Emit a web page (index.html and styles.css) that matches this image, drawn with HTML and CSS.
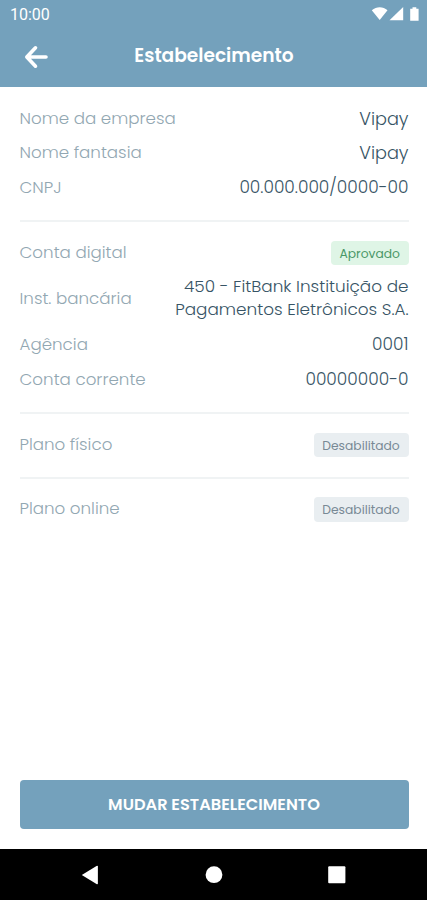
FILE: index.html
```html
<!DOCTYPE html>
<html lang="pt-BR">
<head>
<meta charset="utf-8">
<title>Estabelecimento</title>
<link rel="stylesheet" href="styles.css">
</head>
<body>
<div class="screen">
  <header class="top">
    <div class="status">
      <span class="clock">10:00</span>
      <svg class="signals" width="50" height="16" viewBox="0 0 50 16" fill="#fff">
        <path d="M.8 4.200C5.500 .3 12 .3 16.500 4.200L8.700 14z"/>
        <path d="M18.500 14.300H32.200V1z"/>
        <path d="M39.200 2.800h2.300V1.200h3.800v1.600h2.300V14.800h-8.400z"/>
      </svg>
    </div>
    <div class="appbar">
      <svg class="back" width="26" height="26" viewBox="0 0 26 26" fill="none" stroke="#fff" stroke-width="3.600" stroke-linecap="round" stroke-linejoin="round"><path d="M23 13H4M12.500 3.800L3.800 13l8.700 9.200"/></svg>
      <h1 class="title">Estabelecimento</h1>
    </div>
  </header>
  <main class="content">
    <section class="group">
      <div class="row"><span class="label">Nome da empresa</span><span class="value name">Vipay</span></div>
      <div class="row"><span class="label">Nome fantasia</span><span class="value name">Vipay</span></div>
      <div class="row"><span class="label">CNPJ</span><span class="value">00.000.000/0000-00</span></div>
    </section>
    <section class="group account">
      <div class="row"><span class="label">Conta digital</span><span class="badge approved">Aprovado</span></div>
      <div class="row bank-row"><span class="label">Inst. bancária</span><span class="value bank">450 - FitBank Instituição de<br>Pagamentos Eletrônicos S.A.</span></div>
      <div class="row"><span class="label">Agência</span><span class="value">0001</span></div>
      <div class="row"><span class="label">Conta corrente</span><span class="value">00000000-0</span></div>
    </section>
    <section class="group plan">
      <div class="row"><span class="label">Plano físico</span><span class="badge disabled">Desabilitado</span></div>
    </section>
    <section class="group plan">
      <div class="row"><span class="label">Plano online</span><span class="badge disabled">Desabilitado</span></div>
    </section>
  </main>
  <button class="action">MUDAR ESTABELECIMENTO</button>
  <nav class="navbar">
    <svg width="18" height="20" viewBox="0 0 18 20" fill="#fff"><path d="M.8 10L15.500 1q1.400-.6 1.400.6V18.400q0 1.200-1.400.6z"/></svg>
    <svg width="18" height="18" viewBox="0 0 18 18" fill="#fff"><circle cx="9" cy="8.700" r="8.400"/></svg>
    <svg width="18" height="18" viewBox="0 0 18 18" fill="#fff"><rect x=".2" y=".2" width="17.200" height="17" rx="1"/></svg>
  </nav>
</div>
</body>
</html>
```
FILE: styles.css
```css
* { box-sizing: border-box; }
body {
  margin: 0;
  background: #fff;
  font-family: Poppins, Inter, "Open Sans", sans-serif;
}
.screen {
  width: 427px;
  height: 900px;
  display: flex;
  flex-direction: column;
}
.top {
  height: 87px;
  flex: none;
  background: #74a1bc;
  color: #fff;
}
.status {
  height: 28px;
  padding: 0 6px 0 10px;
  display: flex;
  align-items: center;
  justify-content: space-between;
}
.clock { font: 400 16px/28px Roboto, sans-serif; padding-top: 1px; }
.appbar {
  display: grid;
  grid-template-columns: 36px 1fr 36px;
  align-items: center;
  height: 56px;
  padding: 1px 22px 0 23px;
}
.title {
  margin: 0;
  text-align: center;
  font-size: 18.600px;
  font-weight: 600;
  line-height: 26px;
  padding-bottom: 2px;
}
.content { flex: 1; padding: 0 18.500px 0 19.500px; }
.group {
  display: flex;
  flex-direction: column;
  gap: 11.700px;
  padding: 19.500px 0 21px;
  border-bottom: 2px solid #f0f3f4;
}
.account { padding: 19px 0 21.400px; gap: 11.600px; }
.plan { padding: 18.500px 0 19.500px; }
.group:last-child { border: 0; }
.row {
  display: flex;
  align-items: center;
  justify-content: space-between;
  min-height: 23px;
  font-size: 16.700px;
  line-height: 23px;
  font-weight: 300;
  white-space: nowrap;
}
.bank-row { margin-top: -1.500px; }
.label { color: #92a7b2; }
.account .row:first-child .label, .plan .label { margin-top: -1.500px; }
.value { color: #375465; text-align: right; font-size: 17px; }
.name { font-size: 17.700px; }
.bank { font-size: 16.850px; }
.badge {
  height: 24.500px;
  border-radius: 4px;
  font-size: 12.300px;
  line-height: 25px;
  font-weight: 400;
  text-align: center;
}
.approved { width: 77.500px; background: #dff5e6; color: #4b9868; }
.disabled { width: 95px; background: #e9eef1; color: #788995; }
.action {
  height: 48.500px;
  flex: none;
  margin: 0 18.500px 20.500px 19.500px;
  border: 0;
  border-radius: 4px;
  background: #74a1bc;
  color: #fff;
  font-family: inherit;
  font-size: 16.200px;
  font-weight: 600;
  white-space: nowrap;
}
.navbar {
  height: 51px;
  flex: none;
  background: #000;
  display: flex;
  align-items: center;
  justify-content: space-between;
  padding: 0 81px;
}
```
